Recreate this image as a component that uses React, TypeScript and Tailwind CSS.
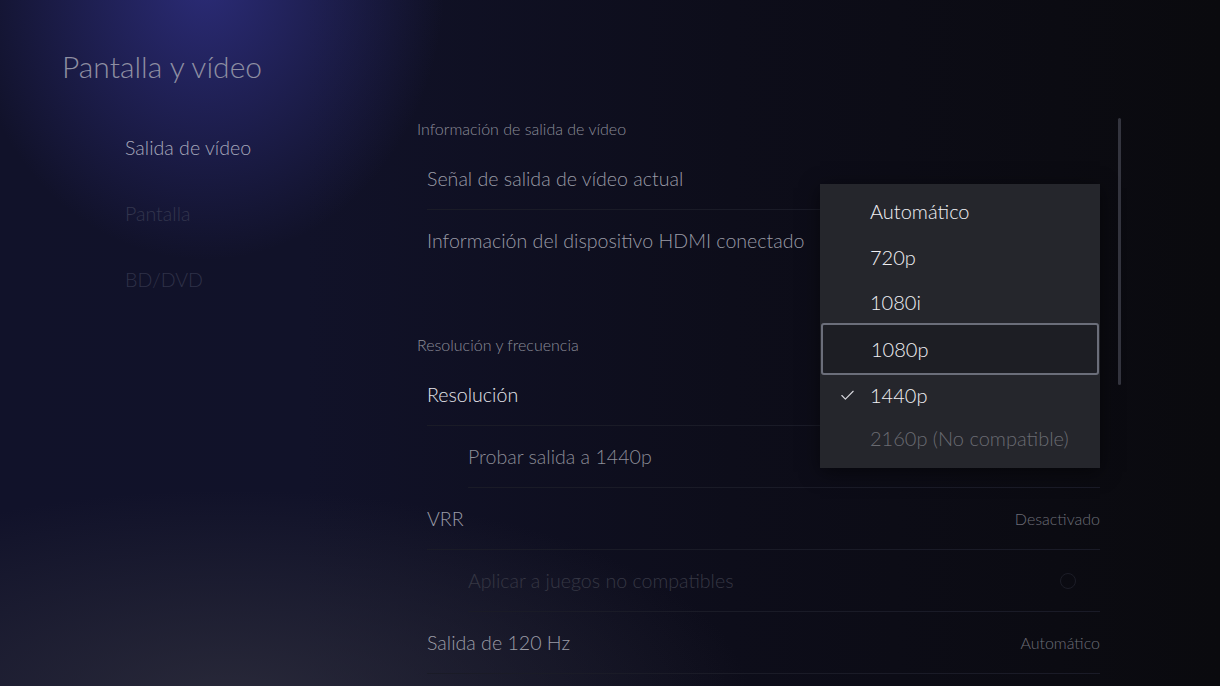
import { Check } from "lucide-react";

const font = "font-['Lato','Liberation_Sans',sans-serif]";

type Row = { label: string; value?: string; indent?: boolean; tone: string; divider?: boolean };

const videoInfo: Row[] = [
  { label: "Señal de salida de vídeo actual", tone: "text-[#9a9ba6]", divider: true },
  { label: "Información del dispositivo HDMI conectado", tone: "text-[#9a9ba6]" },
];

const resolution: Row[] = [
  { label: "Resolución", tone: "text-[#e4e4ea]", divider: true },
  { label: "Probar salida a 1440p", indent: true, tone: "text-[#8c8d97]", divider: true },
  { label: "VRR", value: "Desactivado", tone: "text-[#9a9ba6]", divider: true },
  { label: "Aplicar a juegos no compatibles", indent: true, tone: "text-[#363744]", divider: true },
  { label: "Salida de 120 Hz", value: "Automático", tone: "text-[#9a9ba6]", divider: true },
];

const options = [
  { label: "Automático", h: "h-[46px]" },
  { label: "720p", h: "h-[46px]" },
  { label: "1080i", h: "h-[43px]" },
  { label: "1080p", h: "h-[52px]", focused: true },
  { label: "1440p", h: "h-[40px]", checked: true },
  { label: "2160p (No compatible)", h: "h-[46px]", disabled: true },
];

function SettingRow({ row }: { row: Row }) {
  return (
    <div
      className={`h-[62px] flex items-center justify-between ${row.indent ? "ml-[51px]" : "ml-[10px]"} ${
        row.divider ? "border-b border-[#1a1b27]" : ""
      }`}
    >
      <span className={`text-[19.6px] font-light ${row.tone}`}>{row.label}</span>
      {row.value && <span className="text-[16px] font-light text-[#6c6d77]">{row.value}</span>}
      {row.label.startsWith("Aplicar") && (
        <span className="w-[16px] h-[16px] rounded-full border border-[#1c1d27] mr-[24px]" />
      )}
    </div>
  );
}

export default function App() {
  return (
    <div
      className={`relative w-[1220px] h-[686px] overflow-hidden flex ${font} bg-[radial-gradient(ellipse_240px_280px_at_205px_-20px,rgba(60,60,170,0.6),transparent),radial-gradient(ellipse_520px_210px_at_230px_700px,rgba(48,48,62,0.75),transparent),linear-gradient(90deg,#11122a,#111229_25%,#0d0d1a_60%,#0a0a0e)]`}
    >
      {/* left column */}
      <div className="w-[417px] shrink-0 pl-[62px] pt-[44px]">
        <h1 className="text-[30px] leading-[44px] font-light text-[#8e8fa2]">Pantalla y vídeo</h1>
        <nav className="mt-[27px] pl-[63px] flex flex-col">
          <div className="h-[66px] flex items-center text-[19.6px] font-light text-[#a6a7ba]">Salida de vídeo</div>
          <div className="h-[66px] flex items-center text-[19.6px] font-light text-[#33354e]">Pantalla</div>
          <div className="h-[66px] flex items-center text-[19.6px] font-light text-[#2f3148]">BD/DVD</div>
        </nav>
      </div>

      {/* settings list */}
      <div className="w-[683px] shrink-0 pt-[119px]">
        <div className="h-[20px] flex items-center text-[16px] font-light text-[#8b8c98]">
          Información de salida de vídeo
        </div>
        <div className="mt-[9px]">
          {videoInfo.map((r) => (
            <SettingRow key={r.label} row={r} />
          ))}
        </div>
        <div className="mt-[63px] h-[20px] flex items-center text-[16px] font-light text-[#8b8c98]">
          Resolución y frecuencia
        </div>
        <div className="mt-[9px]">
          {resolution.map((r) => (
            <SettingRow key={r.label} row={r} />
          ))}
        </div>
      </div>

      {/* scrollbar */}
      <div className="absolute left-[1118px] top-[118px] w-[3px] h-[267px] rounded-full bg-[#34353f]" />

      {/* resolution dropdown */}
      <div className="absolute left-[820px] top-[184px] w-[280px] h-[284px] bg-[#25262c] pt-[4px] shadow-[0_4px_18px_rgba(0,0,0,0.5)]">
        {options.map((o) => (
          <div
            key={o.label}
            className={`${o.h} flex items-center relative ${
              o.focused ? "mx-[1px] border-2 border-[#6b6e7a] rounded-[3px] bg-[#1d1e24] pl-[48px]" : "pl-[50px]"
            }`}
          >
            {o.checked && (
              <Check className="absolute left-[19px] w-[17px] h-[17px] text-[#d8d8de]" strokeWidth={1.6} />
            )}
            <span className={`text-[20px] font-light ${o.disabled ? "text-[#6a6b72]" : "text-[#f0f0f4]"}`}>
              {o.label}
            </span>
          </div>
        ))}
      </div>
    </div>
  );
}
